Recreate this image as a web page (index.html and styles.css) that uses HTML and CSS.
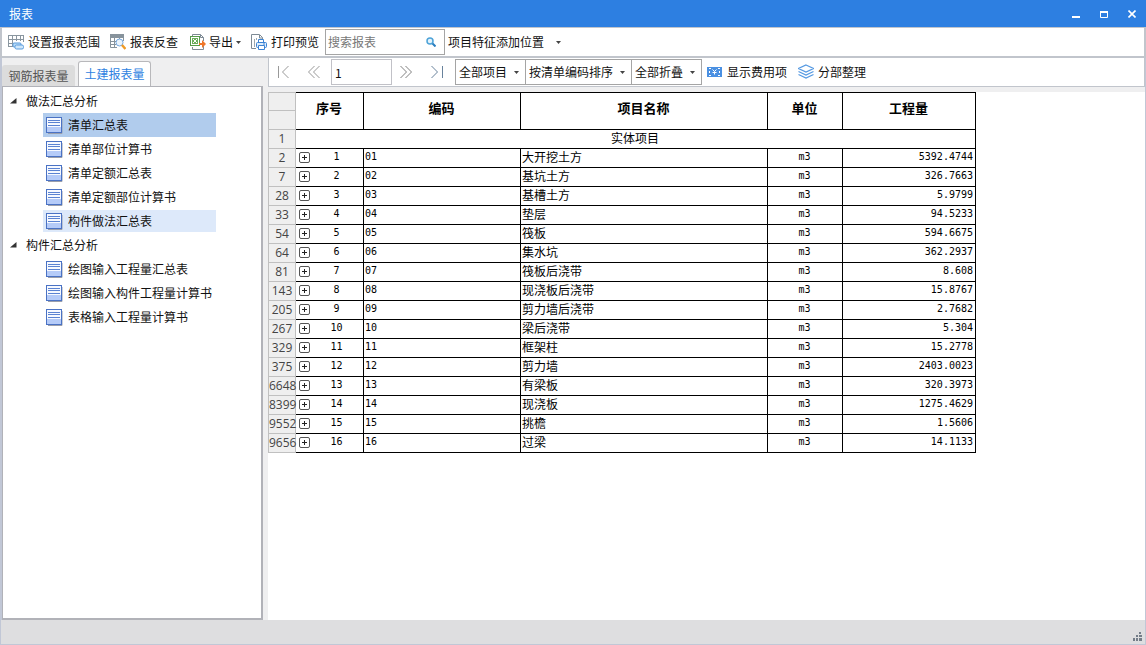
FILE: index.html
```html
<!DOCTYPE html>
<html lang="zh-CN">
<head>
<meta charset="utf-8">
<title>报表</title>
<link rel="stylesheet" href="styles.css">
</head>
<body>
<svg class="symbols" aria-hidden="true">
  <symbol id="doc" viewBox="0 0 17 17">
    <path d="M16 2v14.5H2" fill="none" stroke="#9a9fac"/>
    <rect class="doc-page" x=".5" y=".5" width="15" height="15"/>
    <rect class="doc-foot" x="1" y="10" width="14" height="5"/>
    <path d="M2 3.5h12M2 5.5h12M2 8.5h12" stroke="#5b83d2"/>
  </symbol>
  <symbol id="plus" viewBox="0 0 11 11">
    <rect x=".5" y=".5" width="10" height="10" rx="1.5" fill="#fff" stroke="#555"/>
    <path d="M3 5.5h5M5.5 3v5" stroke="#222"/>
  </symbol>
  <symbol id="caret" viewBox="0 0 5 3"><path d="M0 0h5L2.5 3z" fill="#444"/></symbol>
  <symbol id="open" viewBox="0 0 7 6"><path d="M6.5 0v5.5H0z" fill="#333"/></symbol>
</svg>
<div class="window">
  <header class="titlebar">
    <h1>报表</h1>
    <div class="win-controls">
      <button type="button" aria-label="最小化"><svg width="8" height="8"><path d="M0 7h8" stroke="#fff" stroke-width="2"/></svg></button>
      <button type="button" aria-label="最大化"><svg width="8" height="8"><path d="M.5 1v6.500h7V1" fill="none" stroke="#fff"/><path d="M0 2h8" stroke="#fff" stroke-width="2"/></svg></button>
      <button type="button" aria-label="关闭"><svg width="8" height="8"><path d="M.5 .5l7 7M7.500 .5l-7 7" stroke="#fff" stroke-width="1.600"/></svg></button>
    </div>
  </header>

  <div class="toolbar main-tools">
    <button type="button" class="tool"><svg width="16" height="16"><path d="M.5 1.500h15M.5 5.500h15M.5 9.500h6M.5 12.500h5M.5 1v12M4.500 1v11M8.500 1v6M12.500 1v6M15.500 1v7" stroke="#8a969f" fill="none"/><rect x="5" y="9" width="8" height="4" rx="1" fill="#b9dcf7" stroke="#5a9bdd"/><rect x="7" y="11" width="8.500" height="4" rx="1.500" fill="#cfe7fa" stroke="#5a9bdd"/></svg>设置报表范围</button>
    <button type="button" class="tool"><svg width="16" height="16"><path d="M0 0h14v4H0z" fill="#87939c"/><path d="M.5 3v10.500H7M4.500 4v9M9.500 4v2M13.500 4v3M0 7.500h7M0 10.500h6" stroke="#87939c" fill="none"/><circle cx="9.500" cy="8.500" r="3.500" fill="#eaf4fd" stroke="#75a8df"/><path d="M12 11l3.500 4" stroke="#ef9b26" stroke-width="2.500"/></svg>报表反查</button>
    <button type="button" class="tool export"><svg width="16" height="16"><path d="M2.500 2V.5h8l3 3V7M13.500 12v3.500h-11V13M10.500 .5v3h3" fill="none" stroke="#7e8a94"/><rect x=".5" y="2.500" width="9" height="9" fill="#fff" stroke="#579b4c"/><rect x="2" y="4" width="6" height="6" fill="#6cae5c"/><path d="M3 5l4 4M7 5L3 9" stroke="#fff"/><path d="M9 9h3V6l4 4-4 4v-3H9z" fill="#ef7629"/></svg>导出<svg class="caret"><use href="#caret"/></svg></button>
    <button type="button" class="tool"><svg width="16" height="16"><path d="M5 14.500H.5V.5h8l3 3V6M8.500 1v3h3" fill="none" stroke="#7e8a94"/><path d="M3 6h1M3 8h1M3 10h1M3 12h1M5 5h1" stroke="#7e8a94" stroke-width="1.500"/><rect x="5.500" y="8.500" width="10" height="5" rx="1" fill="#dcecfb" stroke="#3c83d4"/><path d="M7.500 8V5.500h5V8M7.500 11.500h6v4h-6z" fill="#fff" stroke="#3c83d4"/><path d="M12 10h2" stroke="#3c83d4"/></svg>打印预览</button>
    <label class="search">
      <input type="text" placeholder="搜索报表" aria-label="搜索报表">
      <svg width="10" height="10"><circle cx="4" cy="4" r="3" fill="#e5f3fc" stroke="#4da3d8" stroke-width="1.500"/><path d="M6.500 6.500L9.500 9.500" stroke="#2a7fc0" stroke-width="2"/></svg>
    </label>
    <button type="button" class="tool feature">项目特征添加位置<svg class="caret"><use href="#caret"/></svg></button>
  </div>

  <div class="body">
    <aside class="sidebar">
      <div class="tabs" role="tablist">
        <button type="button" role="tab" class="tab" aria-selected="false">钢筋报表量</button>
        <button type="button" role="tab" class="tab active" aria-selected="true">土建报表量</button>
      </div>
      <nav class="tree">
        <h2><svg width="7" height="6"><use href="#open"/></svg>做法汇总分析</h2>
        <ul>
          <li><a href="#" class="selected"><svg><use href="#doc"/></svg>清单汇总表</a></li>
          <li><a href="#"><svg><use href="#doc"/></svg>清单部位计算书</a></li>
          <li><a href="#"><svg><use href="#doc"/></svg>清单定额汇总表</a></li>
          <li><a href="#"><svg><use href="#doc"/></svg>清单定额部位计算书</a></li>
          <li><a href="#" class="hovered"><svg><use href="#doc"/></svg>构件做法汇总表</a></li>
        </ul>
        <h2><svg width="7" height="6"><use href="#open"/></svg>构件汇总分析</h2>
        <ul>
          <li><a href="#"><svg><use href="#doc"/></svg>绘图输入工程量汇总表</a></li>
          <li><a href="#"><svg><use href="#doc"/></svg>绘图输入构件工程量计算书</a></li>
          <li><a href="#"><svg><use href="#doc"/></svg>表格输入工程量计算书</a></li>
        </ul>
      </nav>
    </aside>

    <main class="content">
      <div class="toolbar report-tools">
        <button type="button" class="nav" aria-label="首页"><svg width="14" height="14"><path d="M1.500 1v12M11.500 1l-6 6 6 6" fill="none" stroke="#999"/></svg></button>
        <button type="button" class="nav" aria-label="上一页"><svg width="14" height="14"><path d="M7.500 1l-6 6 6 6M12.500 1l-6 6 6 6" fill="none" stroke="#999"/></svg></button>
        <input class="page" type="text" value="1" aria-label="页码">
        <button type="button" class="nav" aria-label="下一页"><svg width="14" height="14"><path d="M1.500 1l6 6-6 6M6.500 1l6 6-6 6" fill="none" stroke="#808080"/></svg></button>
        <button type="button" class="nav" aria-label="末页"><svg width="14" height="14"><path d="M1.500 1l6 6-6 6" fill="none" stroke="#68829c"/><path d="M12.500 1v12" stroke="#68829c"/></svg></button>
        <div class="combos">
          <label class="combo"><select aria-label="项目范围"><option>全部项目</option></select><svg class="caret"><use href="#caret"/></svg></label>
          <label class="combo"><select aria-label="排序"><option>按清单编码排序</option></select><svg class="caret"><use href="#caret"/></svg></label>
          <label class="combo"><select aria-label="折叠"><option>全部折叠</option></select><svg class="caret"><use href="#caret"/></svg></label>
        </div>
        <button type="button" class="tool"><svg width="16" height="16"><path d="M0 3h15v10H0z" fill="#4a90e2"/><path d="M2.500 7v2M12.500 7v2M4 4.500H2M13 4.500h-2M4 11.500H2M13 11.500h-2" stroke="#fff"/><path d="M5.500 5.500l2 2 2-2M7.500 7.500v3M5.500 8.500h4" stroke="#fff" fill="none"/></svg>显示费用项</button>
        <button type="button" class="tool layers"><svg width="16" height="16"><path d="M8 1l7.500 3.500L8 8 .5 4.500zM.5 7.500L8 11l7.500-3.500M.5 10.500L8 14l7.500-3.500" fill="none" stroke="#5599e2" stroke-width="1.200"/></svg>分部整理</button>
      </div>
      <div class="report">
        <table>
          <colgroup><col class="c-row"><col class="c-seq"><col class="c-code"><col class="c-name"><col class="c-unit"><col class="c-qty"></colgroup>
          <thead>
            <tr class="first"><td class="rn"></td><th rowspan="2" scope="col">序号</th><th rowspan="2" scope="col">编码</th><th rowspan="2" scope="col">项目名称</th><th rowspan="2" scope="col">单位</th><th rowspan="2" scope="col">工程量</th></tr>
            <tr><td class="rn"></td></tr>
          </thead>
          <tbody>
            <tr><td class="rn">1</td><td colspan="5" class="group">实体项目</td></tr>
            <tr><td class="rn">2</td><td class="seq"><button type="button" aria-label="展开"><svg><use href="#plus"/></svg></button><span>1</span></td><td class="code">01</td><td>大开挖土方</td><td class="unit">m3</td><td class="qty">5392.4744</td></tr>
            <tr><td class="rn">7</td><td class="seq"><button type="button" aria-label="展开"><svg><use href="#plus"/></svg></button><span>2</span></td><td class="code">02</td><td>基坑土方</td><td class="unit">m3</td><td class="qty">326.7663</td></tr>
            <tr><td class="rn">28</td><td class="seq"><button type="button" aria-label="展开"><svg><use href="#plus"/></svg></button><span>3</span></td><td class="code">03</td><td>基槽土方</td><td class="unit">m3</td><td class="qty">5.9799</td></tr>
            <tr><td class="rn">33</td><td class="seq"><button type="button" aria-label="展开"><svg><use href="#plus"/></svg></button><span>4</span></td><td class="code">04</td><td>垫层</td><td class="unit">m3</td><td class="qty">94.5233</td></tr>
            <tr><td class="rn">54</td><td class="seq"><button type="button" aria-label="展开"><svg><use href="#plus"/></svg></button><span>5</span></td><td class="code">05</td><td>筏板</td><td class="unit">m3</td><td class="qty">594.6675</td></tr>
            <tr><td class="rn">64</td><td class="seq"><button type="button" aria-label="展开"><svg><use href="#plus"/></svg></button><span>6</span></td><td class="code">06</td><td>集水坑</td><td class="unit">m3</td><td class="qty">362.2937</td></tr>
            <tr><td class="rn">81</td><td class="seq"><button type="button" aria-label="展开"><svg><use href="#plus"/></svg></button><span>7</span></td><td class="code">07</td><td>筏板后浇带</td><td class="unit">m3</td><td class="qty">8.608</td></tr>
            <tr><td class="rn">143</td><td class="seq"><button type="button" aria-label="展开"><svg><use href="#plus"/></svg></button><span>8</span></td><td class="code">08</td><td>现浇板后浇带</td><td class="unit">m3</td><td class="qty">15.8767</td></tr>
            <tr><td class="rn">205</td><td class="seq"><button type="button" aria-label="展开"><svg><use href="#plus"/></svg></button><span>9</span></td><td class="code">09</td><td>剪力墙后浇带</td><td class="unit">m3</td><td class="qty">2.7682</td></tr>
            <tr><td class="rn">267</td><td class="seq"><button type="button" aria-label="展开"><svg><use href="#plus"/></svg></button><span>10</span></td><td class="code">10</td><td>梁后浇带</td><td class="unit">m3</td><td class="qty">5.304</td></tr>
            <tr><td class="rn">329</td><td class="seq"><button type="button" aria-label="展开"><svg><use href="#plus"/></svg></button><span>11</span></td><td class="code">11</td><td>框架柱</td><td class="unit">m3</td><td class="qty">15.2778</td></tr>
            <tr><td class="rn">375</td><td class="seq"><button type="button" aria-label="展开"><svg><use href="#plus"/></svg></button><span>12</span></td><td class="code">12</td><td>剪力墙</td><td class="unit">m3</td><td class="qty">2403.0023</td></tr>
            <tr><td class="rn">6648</td><td class="seq"><button type="button" aria-label="展开"><svg><use href="#plus"/></svg></button><span>13</span></td><td class="code">13</td><td>有梁板</td><td class="unit">m3</td><td class="qty">320.3973</td></tr>
            <tr><td class="rn">8399</td><td class="seq"><button type="button" aria-label="展开"><svg><use href="#plus"/></svg></button><span>14</span></td><td class="code">14</td><td>现浇板</td><td class="unit">m3</td><td class="qty">1275.4629</td></tr>
            <tr><td class="rn">9552</td><td class="seq"><button type="button" aria-label="展开"><svg><use href="#plus"/></svg></button><span>15</span></td><td class="code">15</td><td>挑檐</td><td class="unit">m3</td><td class="qty">1.5606</td></tr>
            <tr><td class="rn">9656</td><td class="seq"><button type="button" aria-label="展开"><svg><use href="#plus"/></svg></button><span>16</span></td><td class="code">16</td><td>过梁</td><td class="unit">m3</td><td class="qty">14.1133</td></tr>
          </tbody>
        </table>
      </div>
    </main>
  </div>

  <footer class="statusbar">
    <svg width="9" height="9"><path d="M6 0h2v2H6zM3 3h2v2H3zM6 3h3v2H6zM0 6h2v3H0zM3 6h2v3H3zM6 6h3v3H6z" fill="#747d88"/></svg>
  </footer>
</div>
</body>
</html>
```
FILE: styles.css
```css
* { box-sizing: border-box; }

body {
  margin: 0;
  font: 12px/18px "Noto Sans CJK SC", sans-serif;
  color: #111;
}

button, input, select { font: inherit; color: inherit; }

button {
  display: flex;
  align-items: center;
  padding: 0;
  border: 0;
  background: none;
  white-space: nowrap;
}

svg { flex: none; display: block; }
.symbols { position: absolute; width: 0; height: 0; }
.caret { width: 5px; height: 3px; }

.window {
  display: flex;
  flex-direction: column;
  min-height: 100vh;
  background: #efeff0;
}

.titlebar {
  display: flex;
  align-items: center;
  justify-content: space-between;
  height: 27px;
  padding: 0 6px 0 9px;
  background: #2d7fe1;
  color: #fff;
}
.titlebar h1 { margin: 0; font: inherit; }
.win-controls { display: flex; gap: 12px; }
.win-controls button { justify-content: center; width: 16px; height: 16px; }

.toolbar {
  display: flex;
  align-items: center;
  height: 30px;
  background: #fff;
  border: 1px solid #c1c5cc;
  border-bottom-width: 2px;
}
.main-tools { height: 31px; padding-left: 1px; border-left-width: 2px; border-right-width: 2px; }

.tool { gap: 4px; height: 22px; padding: 0 5px; }
.export { gap: 3px; margin-left: 2px; }

.search {
  display: flex;
  align-items: center;
  width: 120px;
  height: 26px;
  margin-left: 1px;
  padding: 0 8px 0 2px;
  border: 1px solid #a5a5a5;
}
.search input { flex: 1; min-width: 0; padding: 0; border: 0; outline: 0; background: none; }
.search input::placeholder { color: #777; opacity: 1; }
.feature { gap: 12px; padding: 0 3px; }

.body { flex: 1; display: flex; }

.sidebar {
  display: flex;
  flex-direction: column;
  width: 263px;
  padding-top: 3px;
  border-left: 2px solid #c1c7d6;
}
.tabs { display: flex; align-items: flex-end; gap: 3px; }
.tab {
  justify-content: center;
  width: 73px;
  height: 21px;
  background: #dcdcdc;
  border-radius: 3px 3px 0 0;
  color: #555;
}
.tab.active {
  height: 25px;
  background: #fff;
  border: 1px solid #b8b8bb;
  border-bottom: 0;
  color: #2d7fe1;
}
.tree {
  flex: 1;
  padding: 2px 0 2px 7px;
  background: #fff;
  border: 1px solid #b1b2b8;
  border-right-width: 2px;
  border-bottom-width: 2px;
}
.tree h2 {
  display: flex;
  align-items: center;
  gap: 9px;
  height: 24px;
  margin: 0;
  font: inherit;
}
.tree ul { margin: 0; padding: 0 45px 0 33px; list-style: none; }
.tree li { display: flex; flex-direction: column; justify-content: center; height: 24px; }
.tree a {
  display: flex;
  align-items: center;
  gap: 5px;
  height: 24px;
  padding-left: 3px;
  color: inherit;
  text-decoration: none;
  white-space: nowrap;
}
.tree a svg { width: 17px; height: 17px; }
.tree .selected { background: #b1cced; }
.tree .hovered { height: 22px; background: #dde9fa; }
.doc-page { fill: #f6f9ff; stroke: #4a72c4; }
.doc-foot { fill: #b5cbf8; }
.selected .doc-page { fill: #a3cdf8; stroke: #2f6dc2; }
.selected .doc-foot { fill: #7db2f4; }

.content {
  flex: 1;
  display: flex;
  flex-direction: column;
  min-width: 0;
  margin-left: 5px;
  gap: 5px;
  border-right: 1px solid #c1c7d6;
}
.report-tools { height: 29px; border-top: 0; border-bottom-width: 1px; }
.nav { justify-content: center; width: 31px; height: 24px; }
.nav:first-child { width: 29px; }
.page { width: 61px; height: 26px; margin: 0 -2px 0 2px; padding: 0 3px; border: 1px solid #c1c1c7; }
.combos { display: flex; margin: 0 1px 0 3px; }
.combo {
  display: flex;
  align-items: center;
  gap: 6px;
  height: 26px;
  margin-right: -1px;
  padding: 0 6px 0 3px;
  border: 1px solid #a5a5a5;
}
.combo select {
  appearance: none;
  padding: 0;
  border: 0;
  outline: 0;
  background: none;
}
.layers { padding-left: 6px; }

.report { flex: 1; background: #fff; overflow: auto; }
table { table-layout: fixed; width: 708px; border-collapse: separate; border-spacing: 0; }
.c-row { width: 28px; }
.c-seq { width: 68px; }
.c-code { width: 157px; }
.c-name { width: 247px; }
.c-unit { width: 75px; }
.c-qty { width: 133px; }

td, th {
  height: 19px;
  padding: 0 2px 2px 1px;
  border: 0 solid #000;
  border-width: 0 1px 1px 0;
  line-height: 16px;
  white-space: nowrap;
  color: #000;
}
th { padding-bottom: 6px; border-top-width: 1px; font-size: 13px; }
.rn {
  padding: 0;
  background: #efefef;
  border-color: #c0c0c0;
  border-left-width: 1px;
  font: 12px/18px "Open Sans", sans-serif;
  color: #444;
  text-align: center;
}
.first .rn { border-top-width: 1px; }
.group { text-align: center; }
.seq, .code, .unit, .qty { font-family: "DejaVu Sans Mono", monospace; font-size: 10px; }
.seq { padding-left: 3px; padding-right: 0; }
.seq button { float: left; margin-top: 3px; }
.seq button svg { width: 11px; height: 11px; }
.seq span { display: block; text-align: center; }
.unit { text-align: center; }
.qty { text-align: right; }

.statusbar {
  display: flex;
  align-items: flex-end;
  justify-content: flex-end;
  height: 25px;
  padding: 3px;
  background: #dedee0;
  border: 1px solid #c1c7d6;
  border-top: 0;
}
```
